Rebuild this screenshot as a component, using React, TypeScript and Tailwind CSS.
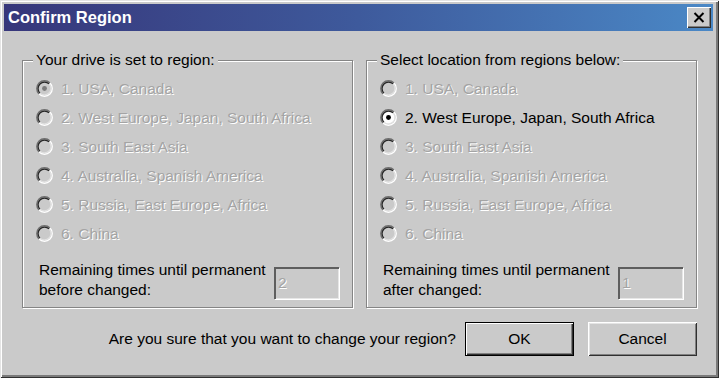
import React from "react";

const FONT = { fontFamily: '"Liberation Sans", Arial, sans-serif' };

function Radio({ checked, enabled }: { checked?: boolean; enabled?: boolean }) {
  const c = 8;
  const k = 0.7071;
  const arc = (r: number, tl: boolean) => {
    const blx = c - r * k, bly = c + r * k, trx = c + r * k, try_ = c - r * k;
    return tl
      ? `M ${blx} ${bly} A ${r} ${r} 0 0 1 ${trx} ${try_}`
      : `M ${trx} ${try_} A ${r} ${r} 0 0 1 ${blx} ${bly}`;
  };
  return (
    <svg width="17" height="17" viewBox="0 0 16 16" className="shrink-0">
      <circle cx="8" cy="8" r="6" fill={enabled ? "#ffffff" : "#cacaca"} />
      <path d={arc(7.3, true)} stroke="#6e6e6e" strokeWidth="1.3" fill="none" />
      <path d={arc(7.3, false)} stroke="#ffffff" strokeWidth="1.3" fill="none" />
      <path d={arc(6.1, true)} stroke="#262626" strokeWidth="1.2" fill="none" />
      <path d={arc(6.1, false)} stroke="#e0e0e0" strokeWidth="1.2" fill="none" />
      {checked && <circle cx="8" cy="8" r="2.3" fill={enabled ? "#000000" : "#7a7a7a"} />}
    </svg>
  );
}

const regions = [
  "1. USA, Canada",
  "2. West Europe, Japan, South Africa",
  "3. South East Asia",
  "4. Australia, Spanish America",
  "5. Russia, East Europe, Africa",
  "6. China",
];

function GroupBox({
  title,
  selected,
  enabledIndex,
  line1,
  line2,
  value,
}: {
  title: string;
  selected: number;
  enabledIndex: number;
  line1: string;
  line2: string;
  value: string;
}) {
  return (
    <div className="flex w-[331px] flex-col border border-[#858585] shadow-[inset_1px_1px_0_#fff,1px_1px_0_#fff] pl-[13px] pr-[13px] pb-[7px]">
      <div className="-mt-[11px] ml-[-3px] h-[20px] leading-[20px] self-start bg-[#cacaca] px-[3px] text-[15.5px] text-black">
        {title}
      </div>
      <div className="mt-[4px] flex flex-col">
        {regions.map((r, i) => {
          const en = i === enabledIndex;
          return (
            <div key={r} className="flex h-[29px] items-center">
              <Radio checked={i === selected} enabled={en} />
              <span
                className={`ml-[8px] text-[15.5px] ${
                  en ? "text-black" : "text-[#a4a4a4] [text-shadow:1px_1px_0_#ffffff]"
                }`}
              >
                {r}
              </span>
            </div>
          );
        })}
      </div>
      <div className="mt-[12px] flex items-start justify-between">
        <div className="pl-[3px] text-[15.5px] leading-[20px] text-black">
          <div>{line1}</div>
          <div>{line2}</div>
        </div>
        <div className="mt-[7px] flex h-[32px] w-[65px] items-start border-t-2 border-l-2 border-t-[#5e5e5e] border-l-[#5e5e5e] shadow-[1px_1px_0_#ffffff,inset_-1px_-1px_0_#e6e6e6] px-[2px] text-[15.5px] text-[#a4a4a4] [text-shadow:1px_1px_0_#ffffff]">
          <span className="mt-[2px]">{value}</span>
        </div>
      </div>
    </div>
  );
}

export default function App() {
  return (
    <div
      style={FONT}
      className="flex h-[378px] w-[719px] flex-col bg-[#cacaca] pl-[4px] pr-[6px] pt-[4px] shadow-[inset_1px_1px_0_#e4e4e4,inset_-1px_-1px_0_#303030,inset_2px_2px_0_#ffffff,inset_-3px_-3px_0_#7a7a7a]"
    >
      <div className="flex h-[27px] items-center justify-between bg-gradient-to-r from-[#36367a] via-[#3e5a9c] to-[#4a88c6] pl-[4px] pr-[2px]">
        <span className="text-[16.5px] font-bold text-white">Confirm Region</span>
        <div className="flex h-[21px] w-[24px] items-center justify-center bg-[#cacaca] shadow-[inset_1px_1px_0_#ffffff,inset_-1px_-1px_0_#303030,inset_-2px_-2px_0_#808080]">
          <svg width="12" height="11" viewBox="0 0 12 11">
            <path d="M1.5 1 L10.5 10 M10.5 1 L1.5 10" stroke="#000" strokeWidth="2" />
          </svg>
        </div>
      </div>
      <div className="mt-[29px] flex gap-[13px] pl-[18px]">
        <GroupBox
          title="Your drive is set to region:"
          selected={0}
          enabledIndex={-1}
          line1="Remaining times until permanent"
          line2="before changed:"
          value="2"
        />
        <GroupBox
          title="Select location from regions below:"
          selected={1}
          enabledIndex={1}
          line1="Remaining times until permanent"
          line2="after changed:"
          value="1"
        />
      </div>
      <div className="mt-[14px] flex items-center justify-end pr-[16px]">
        <span className="mr-[9px] text-[15.5px] text-black">
          Are you sure that you want to change your region?
        </span>
        <button className="flex h-[34px] w-[109px] items-center justify-center border border-black bg-[#cacaca] text-[15.5px] text-black shadow-[inset_1px_1px_0_#ffffff,inset_-1px_-1px_0_#303030,inset_-2px_-2px_0_#808080]">
          OK
        </button>
        <button className="ml-[14px] flex h-[34px] w-[109px] items-center justify-center bg-[#cacaca] text-[15.5px] text-black shadow-[inset_1px_1px_0_#ffffff,inset_-1px_-1px_0_#303030,inset_2px_2px_0_#e4e4e4,inset_-2px_-2px_0_#808080]">
          Cancel
        </button>
      </div>
    </div>
  );
}
